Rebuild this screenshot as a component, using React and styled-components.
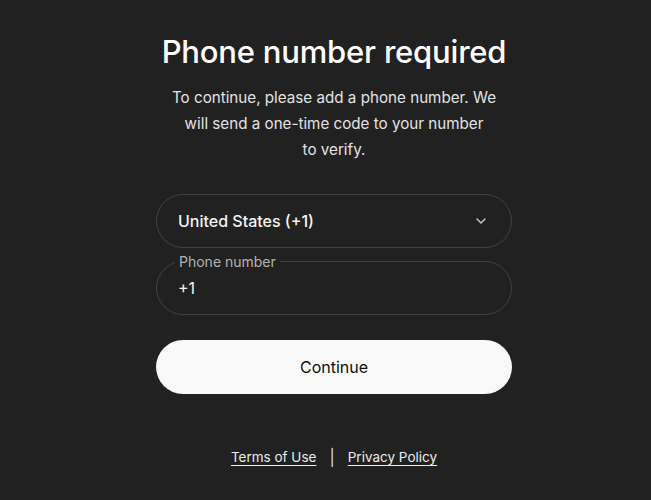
import React from "react";
import styled, { createGlobalStyle } from "styled-components";

const Global = createGlobalStyle`
  html, body { margin: 0; padding: 0; background: #212121; }
  body { font-family: Inter, "Noto Sans", sans-serif; color: #ececec; -webkit-font-smoothing: antialiased; }
`;

const Page = styled.div`
  min-height: 500px;
  display: flex;
  justify-content: center;
  padding-left: 17px;
  box-sizing: border-box;
`;

const Column = styled.div`
  width: 356px;
  display: flex;
  flex-direction: column;
  align-items: stretch;
  padding-top: 32px;
`;

const Title = styled.h1`
  margin: 0;
  font-size: 31px;
  line-height: 40px;
  font-weight: 500;
  text-align: center;
  color: #ffffff;
  letter-spacing: -0.2px;
`;

const Subtitle = styled.p`
  margin: 13px auto 0;
  width: 330px;
  font-size: 15.2px;
  line-height: 26px;
  text-align: center;
  color: #e3e3e3;
`;

const Field = styled.div`
  position: relative;
  height: 54px;
  box-sizing: border-box;
  border: 1px solid #424242;
  border-radius: 27px;
  display: flex;
  align-items: center;
  justify-content: space-between;
  padding: 0 22px 0 21px;
  margin-top: ${(p) => p.$mt}px;
`;

const Value = styled.span`
  font-size: 16px;
  font-weight: ${(p) => (p.$bold ? 500 : 400)};
  color: #f4f4f4;
`;

const FloatLabel = styled.span`
  position: absolute;
  top: -9px;
  left: 18px;
  padding: 0 4px;
  background: #212121;
  font-size: 14px;
  line-height: 18px;
  color: #b4b4b4;
`;

const Button = styled.button`
  margin-top: 25px;
  height: 54px;
  border: none;
  border-radius: 27px;
  background: #f9f9f9;
  color: #0d0d0d;
  font-family: inherit;
  font-size: 16px;
  font-weight: 400;
  cursor: pointer;
`;

const Footer = styled.div`
  margin-top: 53px;
  display: flex;
  justify-content: center;
  align-items: center;
  gap: 13px;
  font-size: 13.5px;
  line-height: 20px;
`;

const Link = styled.a`
  color: #ececec;
  text-decoration: underline;
  text-underline-offset: 3px;
`;

const Sep = styled.span`
  color: #cfd8ff;
  font-size: 16px;
`;

const Chevron = () => (
  <svg width="16" height="16" viewBox="0 0 24 24" fill="none" stroke="#cdcdcd" strokeWidth="2" strokeLinecap="round" strokeLinejoin="round">
    <path d="M6 9l6 6 6-6" />
  </svg>
);

export default function App() {
  return (
    <>
      <Global />
      <Page>
        <Column>
          <Title>Phone number required</Title>
          <Subtitle>
            To continue, please add a phone number. We will send a one-time code to your number
            <br />
            to verify.
          </Subtitle>
          <Field $mt={31}>
            <Value $bold>United States (+1)</Value>
            <Chevron />
          </Field>
          <Field $mt={13}>
            <FloatLabel>Phone number</FloatLabel>
            <Value>+1</Value>
          </Field>
          <Button>Continue</Button>
          <Footer>
            <Link href="#">Terms of Use</Link>
            <Sep>|</Sep>
            <Link href="#">Privacy Policy</Link>
          </Footer>
        </Column>
      </Page>
    </>
  );
}
